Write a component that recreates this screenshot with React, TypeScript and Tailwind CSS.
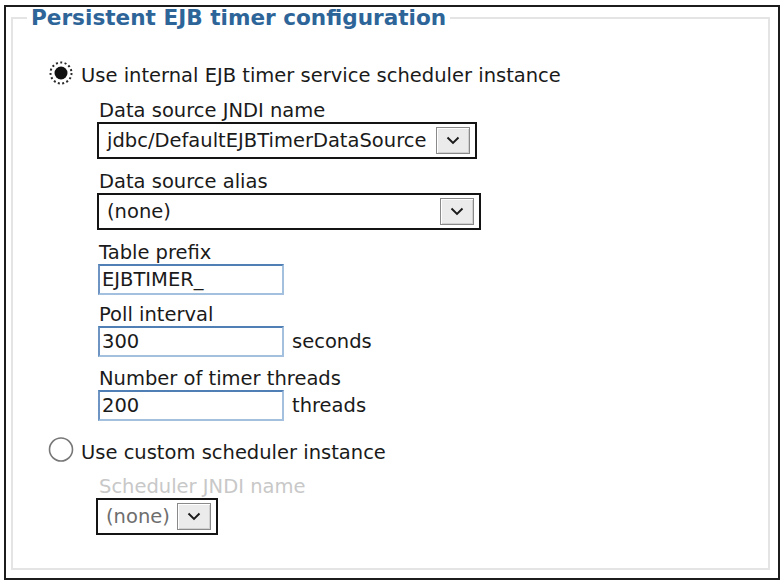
import React from "react";

function Chevron() {
  return (
    <svg width="14" height="9" viewBox="0 0 14 9">
      <path d="M1.5 1.5 L7 7 L12.5 1.5" fill="none" stroke="#1a1a1a" strokeWidth="1.9" />
    </svg>
  );
}

function Select({ value, width, muted }: { value: string; width: string; muted?: boolean }) {
  return (
    <div className={`flex h-[37px] items-center border-2 border-[#141414] bg-white pl-[8px] pr-[5px] ${width}`}>
      <span className={`flex-1 whitespace-nowrap leading-[23px] ${muted ? "text-[#6e6e6e]" : ""}`}>{value}</span>
      <span className="flex h-[27px] w-[34px] shrink-0 items-center justify-center border border-[#8a8a8a] bg-[#ebebeb] shadow-[inset_1px_1px_0_#ffffff,inset_-1px_-1px_0_#d0d0d0]">
        <Chevron />
      </span>
    </div>
  );
}

function TextField({ value, unit }: { value: string; unit?: string }) {
  return (
    <div className="ml-[1px] flex items-center">
      <div className="flex h-[31px] w-[186px] items-center border-2 border-[#a3c0df] border-t-[#4f7fb4] border-l-[#6d94c2] bg-white pl-[2px] leading-[23px]">
        {value}
      </div>
      {unit && <span className="ml-[8px] leading-[23px]">{unit}</span>}
    </div>
  );
}

function Label({ children, className = "" }: { children: React.ReactNode; className?: string }) {
  return <div className={`pl-[2px] leading-[23px] ${className}`}>{children}</div>;
}

export default function App() {
  return (
    <div className="min-h-screen bg-white pl-[4px] pt-[5px] font-['DejaVu_Sans',sans-serif] text-[19.5px] text-[#1a1a1a]">
      <div className="flex h-[575px] w-[776px] flex-col border-2 border-[#1c1c1c] pb-[8px] pl-[5px] pr-[8px] pt-[0px]">
        <fieldset className="min-w-0 flex-1 border-2 border-[#e4e4e4]">
          <legend className="ml-[14px] px-[4px] text-[21.6px] font-bold leading-[22px] text-[#2e6599]">
            Persistent EJB timer configuration
          </legend>
          <div className="pl-[35px]">
            <div className="mt-[31px] flex items-start">
              <svg width="26" height="26" viewBox="0 0 26 26">
                <circle cx="13" cy="13" r="10.5" fill="none" stroke="#2a2a2a" strokeWidth="2" strokeDasharray="2 2.4" />
                <circle cx="13" cy="13" r="6.5" fill="#111" />
              </svg>
              <span className="ml-[7px] mt-[4px] leading-[23px]">Use internal EJB timer service scheduler instance</span>
            </div>

            <div className="ml-[49px]">
              <Label className="mt-[12px]">Data source JNDI name</Label>
              <Select value="jdbc/DefaultEJBTimerDataSource" width="w-[380px]" />
              <Label className="mt-[11px]">Data source alias</Label>
              <Select value="(none)" width="w-[384px]" />
              <Label className="mt-[11px]">Table prefix</Label>
              <TextField value="EJBTIMER_" />
              <Label className="mt-[8px]">Poll interval</Label>
              <TextField value="300" unit="seconds" />
              <Label className="mt-[10px]">Number of timer threads</Label>
              <TextField value="200" unit="threads" />
            </div>

            <div className="mt-[16px] flex items-start">
              <svg width="26" height="26" viewBox="0 0 26 26">
                <circle cx="13" cy="12.5" r="11.5" fill="#fff" stroke="#777" strokeWidth="1.6" />
              </svg>
              <span className="ml-[7px] mt-[4px] leading-[23px]">Use custom scheduler instance</span>
            </div>

            <div className="ml-[49px]">
              <Label className="mt-[11px] text-[#c8c8c8]">Scheduler JNDI name</Label>
              <div className="-ml-[1px]">
                <Select value="(none)" width="w-[122px]" muted />
              </div>
            </div>
          </div>
        </fieldset>
      </div>
    </div>
  );
}
